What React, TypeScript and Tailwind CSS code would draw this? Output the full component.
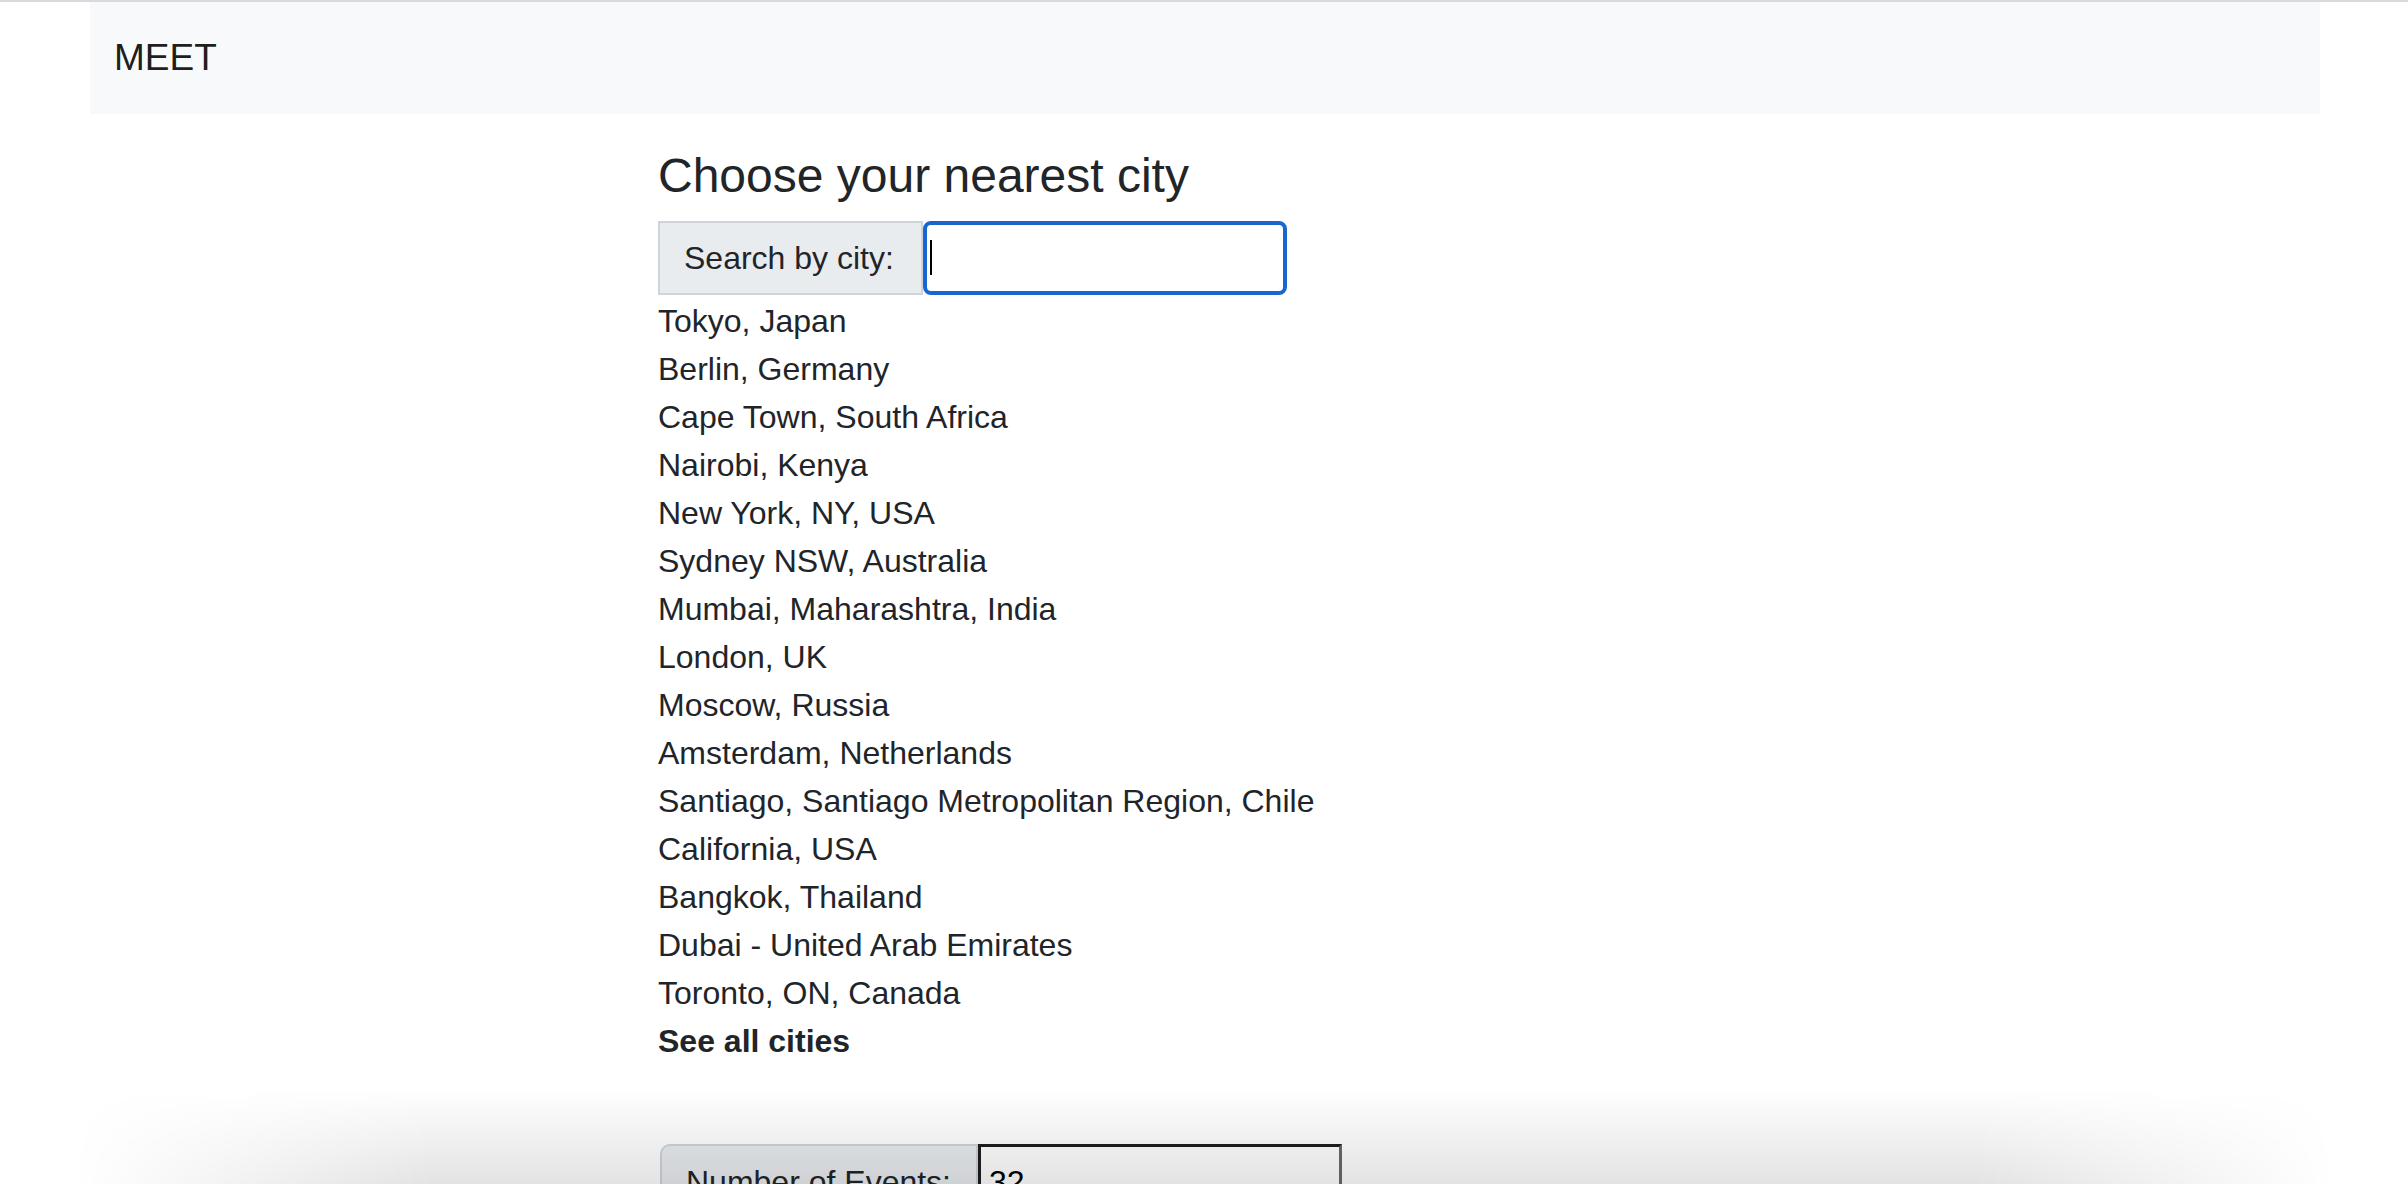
import React from "react";

const cities = [
  "Tokyo, Japan",
  "Berlin, Germany",
  "Cape Town, South Africa",
  "Nairobi, Kenya",
  "New York, NY, USA",
  "Sydney NSW, Australia",
  "Mumbai, Maharashtra, India",
  "London, UK",
  "Moscow, Russia",
  "Amsterdam, Netherlands",
  "Santiago, Santiago Metropolitan Region, Chile",
  "California, USA",
  "Bangkok, Thailand",
  "Dubai - United Arab Emirates",
  "Toronto, ON, Canada",
];

const App: React.FC = () => {
  return (
    <div className="relative h-[1184px] overflow-hidden bg-white border-t-2 border-[#d9dadd] font-['Liberation_Sans',Arial,sans-serif] text-[#212529]">
      {/* navbar */}
      <nav className="ml-[90px] w-[2230px] h-[112px] bg-[#f8f9fa] flex items-center pl-[24px]">
        <span className="text-[37px] leading-[60px] text-black/90">MEET</span>
      </nav>

      <div className="ml-[658px]">
        <h4 className="mt-[33px] mb-[16px] text-[48px] leading-[57.6px] font-medium">
          Choose your nearest city
        </h4>

        {/* search */}
        <div className="flex h-[74px]">
          <div className="w-[265px] flex items-center px-[24px] bg-[#e9ecef] border-2 border-[#ced4da] text-[32px]">
            Search by city:
          </div>
          <div className="w-[364px] flex items-center pl-[3px] border-4 border-[#1766d1] rounded-[8px]">
            <span className="w-[2px] h-[35px] bg-black"></span>
          </div>
        </div>

        <ul className="mt-[2px] text-[32px] leading-[48px]">
          {cities.map((c) => (
            <li key={c}>{c}</li>
          ))}
          <li className="font-bold">See all cities</li>
        </ul>

        {/* number of events */}
        <div className="flex h-[76px] mt-[79px] ml-[2px]">
          <div className="w-[318px] flex items-center px-[24px] bg-[#e9ecef] border-2 border-[#ced4da] rounded-tl-[10px] text-[32px]">
            Number of Events:
          </div>
          <div className="w-[364px] flex items-center pl-[8px] border-[3px] border-[#1f1f1f] border-r-[#6a6a6a] text-[32px] text-black">
            32
          </div>
        </div>
      </div>

      {/* window shadow at the bottom */}
      <div className="absolute left-0 right-0 bottom-0 h-[95px] bg-gradient-to-b from-transparent to-black/[0.11] [mask-image:linear-gradient(to_right,transparent_3%,black_18%,black_82%,transparent_97%)] pointer-events-none"></div>
    </div>
  );
};

export default App;
